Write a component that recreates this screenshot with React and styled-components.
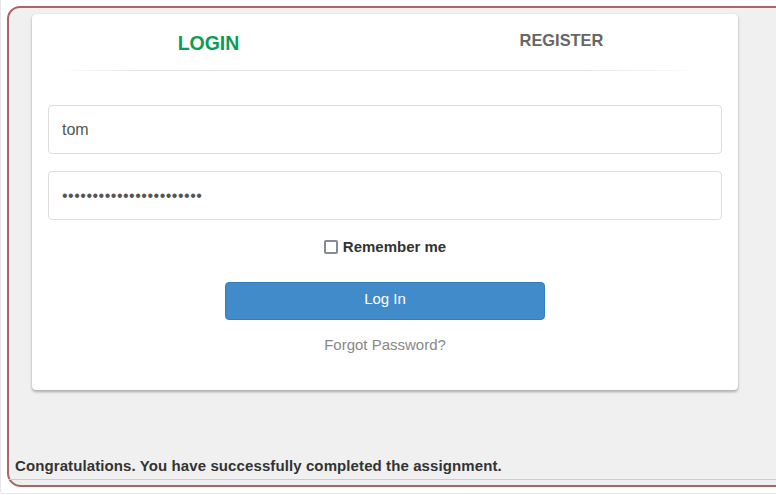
import React from "react";
import styled, { createGlobalStyle } from "styled-components";

const Global = createGlobalStyle`
  html, body { margin: 0; padding: 0; background: #fff; overflow: hidden; }
  body { font-family: "Liberation Sans", Arial, sans-serif; }
  * { box-sizing: border-box; }
`;

const Page = styled.div`
  width: 820px;
  height: 494px;
  border-left: 1px solid #e6e6ec;
  border-bottom: 1px solid #e6e6ec;
  border-bottom-left-radius: 4px;
  padding: 6px 0 0 6px;
`;

const Frame = styled.div`
  width: 100%;
  height: 481px;
  border: 2px solid #a86665;
  border-radius: 13px 0 0 14px;
  background: #f0f0f0;
  display: flex;
  flex-direction: column;
`;

const Content = styled.div`
  padding: 6px 0 0 23px;
`;

const Card = styled.div`
  width: 706px;
  height: 376px;
  background: #fff;
  border-radius: 4px;
  box-shadow: 0 2px 3px rgba(0, 0, 0, 0.28), 0 0 1px rgba(0, 0, 0, 0.2);
  display: flex;
  flex-direction: column;
`;

const Tabs = styled.div`
  display: grid;
  grid-template-columns: 1fr 1fr;
  height: 56px;
`;

const Tab = styled.div`
  display: flex;
  justify-content: center;
  align-items: flex-start;
  padding-top: ${(p) => (p.$active ? "18px" : "17px")};
  font-weight: bold;
  line-height: 1.15;
  font-size: ${(p) => (p.$active ? "19.5px" : "16.4px")};
  color: ${(p) => (p.$active ? "#0b9d56" : "#666")};
`;

const Separator = styled.div`
  height: 1px;
  margin: 0 28px;
  background: linear-gradient(to right, rgba(225,225,225,0), #e4e4e4 12%, #e4e4e4 80%, rgba(225,225,225,0));
`;

const Form = styled.form`
  display: flex;
  flex-direction: column;
  padding: 34px 16px 0;
`;

const Input = styled.input`
  height: 49px;
  width: 100%;
  border: 1px solid #ddd;
  border-radius: 4px;
  padding: 0 13px;
  font-family: "Liberation Sans", Arial, sans-serif;
  font-size: 16px;
  color: #555;
  margin-bottom: ${(p) => p.$mb || "17px"};
  outline: none;
  &[type="password"] { letter-spacing: 0.5px; }
`;

const CheckRow = styled.label`
  display: flex;
  justify-content: center;
  align-items: center;
  gap: 5px;
  font-size: 15px;
  line-height: 20px;
  font-weight: bold;
  color: #333;
  height: 20px;
`;

const Box = styled.span`
  width: 14px;
  height: 14px;
  border: 2px solid #858a94;
  border-radius: 2px;
  background: #fff;
`;

const Button = styled.button`
  align-self: center;
  margin-top: 25px;
  width: 320px;
  height: 38px;
  background: #428bca;
  border: 1px solid #357ebd;
  border-radius: 4px;
  color: #fff;
  font-family: "Liberation Sans", Arial, sans-serif;
  font-size: 15px;
  padding: 0 0 5px;
`;

const Forgot = styled.a`
  align-self: center;
  margin-top: 15px;
  font-size: 15px;
  line-height: 20px;
  color: #888;
  text-decoration: none;
`;

const Spacer = styled.div`
  flex: 1;
`;

const Message = styled.div`
  padding-left: 6px;
  font-size: 15px;
  letter-spacing: 0.1px;
  font-weight: bold;
  color: #333;
  line-height: 20px;
  height: 20px;
`;

const Rule = styled.div`
  margin-top: 3px;
  border-top: 1px solid #ccc;
  height: 6px;
`;

export default function App() {
  return (
    <>
      <Global />
      <Page>
        <Frame>
          <Content>
            <Card>
              <Tabs>
                <Tab $active>LOGIN</Tab>
                <Tab>REGISTER</Tab>
              </Tabs>
              <Separator />
              <Form onSubmit={(e) => e.preventDefault()}>
                <Input type="text" defaultValue="tom" />
                <Input type="password" defaultValue="passwordpassword1234567" $mb="17px" />
                <CheckRow>
                  <Box />
                  Remember me
                </CheckRow>
                <Button type="submit">Log In</Button>
                <Forgot href="#">Forgot Password?</Forgot>
              </Form>
            </Card>
          </Content>
          <Spacer />
          <Message>Congratulations. You have successfully completed the assignment.</Message>
          <Rule />
        </Frame>
      </Page>
    </>
  );
}
